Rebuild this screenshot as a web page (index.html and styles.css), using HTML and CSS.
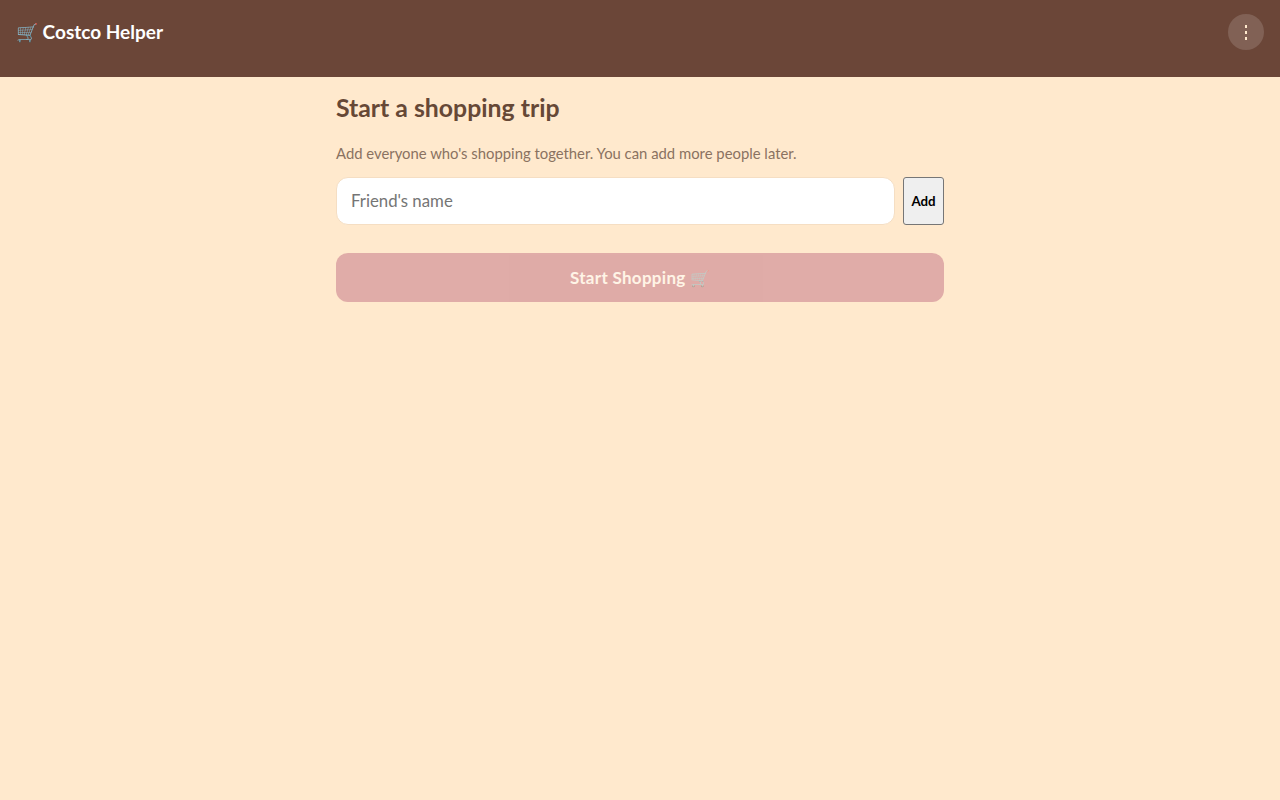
FILE: index.html
```html
<!DOCTYPE html>
<html lang="en">
  <head>
    <meta charset="UTF-8" />
    <meta name="viewport" content="width=device-width, initial-scale=1.0" />
    <title>Costco Helper</title>
    <link rel="stylesheet" href="styles.css">
  </head>

  <body>
    <header class="topbar">
      <div class="brand"><span class="brand-icon">🛒</span> Costco Helper</div>
      <button class="menu-btn" aria-label="Menu">
        <span class="dot"></span>
        <span class="dot"></span>
        <span class="dot"></span>
      </button>
    </header>

    <main class="content">
      <h1 class="title">Start a shopping trip</h1>
      <p class="hint">Add everyone who's shopping together. You can add more people later.</p>
      <div class="add-row">
        <input class="name-input" type="text" placeholder="Friend's name" />
        <button class="add-btn">Add</button>
      </div>
      <button class="start-btn" disabled>Start Shopping <span class="start-icon">🛒</span></button>
    </main>
  </body>
</html>
```

FILE: styles.css
```css
html,
body {
  margin: 0;
  padding: 0;
}

body {
  min-height: 800px;
  background-color: #ffe9cd;
  font-family: "Lato", "Liberation Sans", sans-serif;
}

.topbar {
  display: flex;
  justify-content: space-between;
  align-items: flex-start;
  height: 77px;
  box-sizing: border-box;
  padding: 14px 16px 0 16px;
  background-color: #6b4638;
}

.brand {
  font-weight: 700;
  font-size: 19px;
  line-height: 36px;
  color: #fff;
}

.brand-icon {
  font-size: 18px;
}

.menu-btn {
  display: flex;
  flex-direction: column;
  justify-content: center;
  align-items: center;
  gap: 3px;
  width: 36px;
  height: 36px;
  padding: 0;
  border: none;
  border-radius: 50%;
  background-color: rgba(255, 255, 255, 0.15);
}

.dot {
  width: 2px;
  height: 3px;
  background-color: #ffe9cd;
}

.content {
  width: 608px;
  margin: 0 auto;
  padding-top: 16px;
}

.title {
  margin: 0 0 20px 0;
  font-weight: 700;
  font-size: 24.8px;
  line-height: 30px;
  color: #664836;
}

.hint {
  margin: 0 0 14px 0;
  font-size: 14.85px;
  line-height: 20px;
  color: #8a7261;
}

.add-row {
  display: flex;
  gap: 8px;
  margin-bottom: 28px;
}

.name-input {
  flex: 1;
  height: 48px;
  box-sizing: border-box;
  padding: 0 14px 2px 14px;
  border: 1px solid #f5dec3;
  border-radius: 12px;
  background-color: #fff;
  font-family: inherit;
  font-size: 16.8px;
}

.name-input::placeholder {
  color: #757575;
}

.add-btn {
  width: 41px;
  height: 48px;
  padding: 0;
  border: 1px solid #767676;
  border-radius: 3px;
  background-color: #efefef;
  font-family: inherit;
  font-weight: 700;
  font-size: 13.3px;
  color: #000;
}

.start-btn {
  display: block;
  width: 100%;
  height: 49px;
  padding: 0;
  border: none;
  border-radius: 12px;
  background-color: #c16f83;
  font-family: inherit;
  font-weight: 700;
  font-size: 17px;
  letter-spacing: 0.3px;
  color: #fff;
  opacity: 0.5;
}

.start-icon {
  font-size: 16px;
  letter-spacing: 0;
}
```
